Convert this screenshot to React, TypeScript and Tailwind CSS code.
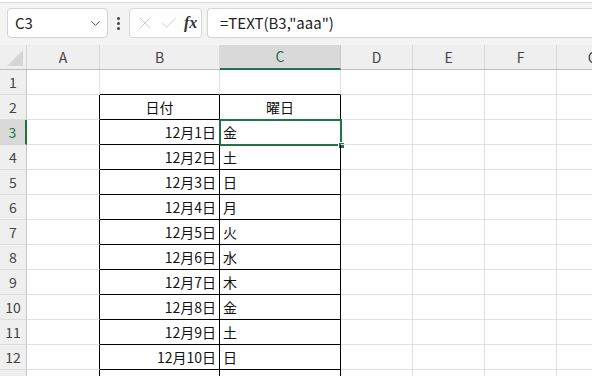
import { ChevronDown, X, Check } from 'lucide-react';

const cols = [
  { key: 'A', w: 73 },
  { key: 'B', w: 120 },
  { key: 'C', w: 121 },
  { key: 'D', w: 72 },
  { key: 'E', w: 72 },
  { key: 'F', w: 72 },
  { key: 'G', w: 72 },
];

const days = ['金', '土', '日', '月', '火', '水', '木', '金', '土', '日'];

function cellText(row: number, col: string) {
  if (row === 2 && col === 'B') return '日付';
  if (row === 2 && col === 'C') return '曜日';
  if (row >= 3 && row <= 12 && col === 'B') return `12月${row - 2}日`;
  if (row >= 3 && row <= 12 && col === 'C') return days[row - 3];
  return '';
}

export default function App() {
  const rows = Array.from({ length: 13 }, (_, i) => i + 1);
  const inTable = (r: number, c: string) => r >= 2 && (c === 'B' || c === 'C');

  return (
    <div className="w-[592px] h-[376px] overflow-hidden bg-white text-[#333]" style={{ fontFamily: '"Noto Sans CJK JP", "Noto Sans", sans-serif' }}>
      {/* formula bar */}
      <div className="h-[43px] bg-[#f3f3f3] border-t border-[#d9d9d9] mt-[2px] flex items-start pt-[5px] pl-[7px]">
        <div className="w-[101px] h-[30px] bg-white border border-[#d4d4d4] rounded-[4px] flex items-center justify-between pl-[7px] pr-[4px]">
          <span className="text-[15px] text-[#222]">C3</span>
          <ChevronDown size={15} strokeWidth={1.5} className="text-[#444]" />
        </div>
        <div className="w-[21px] h-[30px] flex flex-col items-center justify-center gap-[2px]">
          <span className="w-[3px] h-[3px] rounded-full bg-[#444]" />
          <span className="w-[3px] h-[3px] rounded-full bg-[#444]" />
          <span className="w-[3px] h-[3px] rounded-full bg-[#444]" />
        </div>
        <div className="w-[73px] h-[30px] bg-white border border-[#dadada] rounded-[4px] flex items-center pl-[5px] gap-[4px]">
          <X size={20} strokeWidth={1} className="text-[#c4c4c4]" />
          <Check size={20} strokeWidth={1} className="text-[#c4c4c4]" />
          <span className="text-[16px] italic font-semibold text-[#333] ml-[1px]" style={{ fontFamily: '"Liberation Serif", serif' }}>fx</span>
        </div>
        <div className="ml-[5px] flex-1 h-[30px] bg-white border border-[#d4d4d4] border-r-0 rounded-l-[4px] flex items-center pl-[12px]">
          <span className="text-[15px] text-[#222]">=TEXT(B3,"aaa")</span>
        </div>
      </div>

      {/* column header */}
      <div className="flex h-[25px] bg-[#efefef] border-b border-[#bdbdbd]">
        <div className="w-[27px] shrink-0 border-r border-[#d4d4d4] relative">
          <div className="absolute right-[3px] bottom-[3px] w-0 h-0 border-l-[16px] border-l-transparent border-b-[16px] border-b-[#d6d6d6]" />
        </div>
        {cols.map((c) =>
          c.key === 'C' ? (
            <div key={c.key} style={{ width: c.w }} className="shrink-0 bg-[#d9d9d9] border-r border-[#c8c8c8] border-b-2 border-b-[#217346] -mb-px flex items-center justify-center text-[14px] text-[#217346]">
              {c.key}
            </div>
          ) : (
            <div key={c.key} style={{ width: c.w }} className="shrink-0 border-r border-[#d9d9d9] flex items-center justify-center text-[14px] text-[#444]">
              {c.key}
            </div>
          )
        )}
      </div>

      {/* rows */}
      {rows.map((r) => (
        <div key={r} className="flex h-[25px]">
          {r === 3 ? (
            <div className="w-[27px] shrink-0 bg-[#d9d9d9] border-r-2 border-[#217346] border-b border-b-[#d4d4d4] flex items-center justify-center text-[14px] text-[#217346]">
              {r}
            </div>
          ) : (
            <div className="w-[27px] shrink-0 bg-[#efefef] border-r border-[#c6c6c6] border-b border-b-[#dcdcdc] flex items-center justify-center text-[14px] text-[#444]">
              {r <= 12 ? r : ''}
            </div>
          )}
          {cols.map((c) => {
            const t = inTable(r, c.key);
            const rightBlack = t || (c.key === 'A' && r >= 2);
            const bottomBlack = t || (r === 1 && (c.key === 'B' || c.key === 'C'));
            const text = cellText(r, c.key);
            const align =
              r === 2 ? 'justify-center' : c.key === 'B' ? 'justify-end pr-[3px]' : 'justify-start pl-[3px]';
            return (
              <div
                key={c.key}
                style={{ width: c.w }}
                className={`shrink-0 relative flex items-center text-[14px] text-[#111] border-r border-b ${
                  rightBlack ? 'border-r-black' : 'border-r-[#e1e1e1]'
                } ${bottomBlack ? 'border-b-black' : 'border-b-[#e1e1e1]'} ${align}`}
              >
                {text}
                {r === 3 && c.key === 'C' && (
                  <div className="absolute -left-[1px] -top-[1px] w-[123px] h-[27px] border-2 border-[#217346]">
                    <div className="absolute -right-[5px] -bottom-[5px] w-[7px] h-[7px] bg-[#217346] border border-white" />
                  </div>
                )}
              </div>
            );
          })}
        </div>
      ))}
    </div>
  );
}
